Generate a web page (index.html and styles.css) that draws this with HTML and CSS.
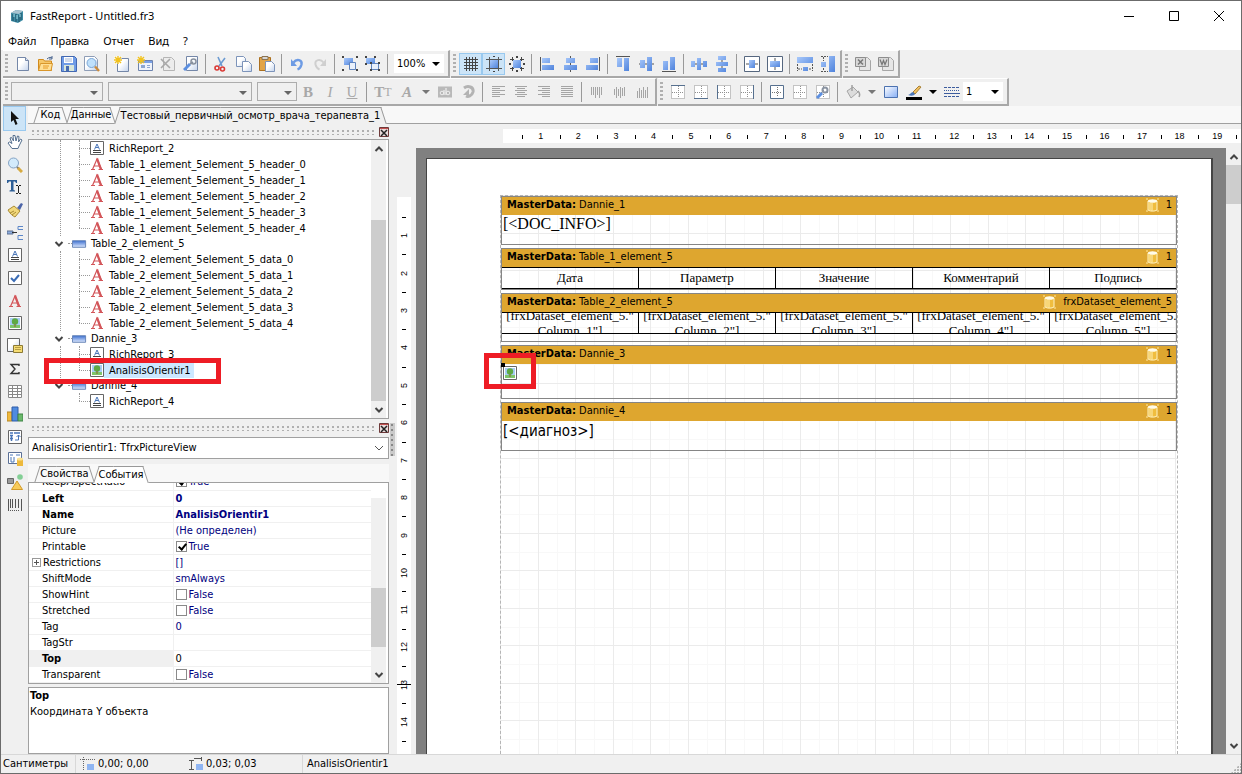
FILE: index.html
```html
<!DOCTYPE html>
<html lang="ru">
<head>
  <meta charset="UTF-8" />
  <meta name="viewport" content="width=device-width, initial-scale=1" />
  <title>FastReport - Untitled.fr3</title>
  <link rel="stylesheet" href="styles.css">
</head>
<body>
  <!-- Иконки -->
  <svg class="sprite" width="0" height="0" aria-hidden="true">
    <defs>
      <linearGradient id="gBlue" x1="0" y1="0" x2="1" y2="1"><stop offset="0" stop-color="#a9c9fb"/><stop offset="1" stop-color="#4f83dc"/></linearGradient>
      <linearGradient id="gPaper" x1="0" y1="0" x2="1" y2="1"><stop offset="0.4" stop-color="#fff"/><stop offset="1" stop-color="#c3d3ec"/></linearGradient>
      <linearGradient id="gBand" x1="0" y1="0" x2="0" y2="1"><stop offset="0" stop-color="#3c6fd0"/><stop offset="1" stop-color="#dfeaff"/></linearGradient>
      <linearGradient id="gFill" x1="0" y1="0" x2="1" y2="1"><stop offset="0" stop-color="#fff"/><stop offset="1" stop-color="#86aef5"/></linearGradient>
    </defs>
    <symbol id="logo" viewBox="0 0 16 16"><path d="M2 5l5-3 7 1v9l-5 3-7-2z" fill="#3c8aa3"/><path d="M2 5l5-3 7 1-4 3z" fill="#a9c3cf"/><path d="M4 6v7M7 6v8M10 7v7M12 5v7" stroke="#1f4f63"/><path d="M5 6v3M8 7v4M11 6v3" stroke="#9fe0ea"/></symbol>
    <symbol id="new" viewBox="0 0 16 16"><path d="M2.500 1.500h8l3 3v10h-11z" fill="url(#gPaper)" stroke="#7487a8"/><path d="M10.500 1.500v3h3" fill="#dce6f5" stroke="#7487a8"/></symbol>
    <symbol id="open" viewBox="0 0 16 16"><path d="M.5 14.500v-11h5l1 1.500h7v9.500z" fill="#f6c768" stroke="#d18a1c"/><path d="M.5 14.500l2-7h12l-1.500 7z" fill="#ffdf95" stroke="#d9962a"/><path d="M5 10h6M5 12h5" stroke="#e79b26"/><path d="M9 3c2-2 4-2 5-1M14 0v3h-3" fill="none" stroke="#47638f"/></symbol>
    <symbol id="save" viewBox="0 0 16 16"><path d="M.5.500h13l2 2v13H.500z" fill="#6f9be6" stroke="#4368b0"/><path d="M3 1h9v6H3z" fill="#fff"/><path d="M4 3h7M4 5h7" stroke="#a3b6d6"/><path d="M3 9h10v6H3z" fill="#d9e6d9"/><path d="M5 10h3v5H5z" fill="#476bb0"/></symbol>
    <symbol id="preview" viewBox="0 0 16 16"><path d="M.5.500h10l3 3v11H.500z" fill="url(#gPaper)" stroke="#8e9db6"/><circle cx="7.500" cy="7" r="4.500" fill="#bfe0fb" stroke="#7ba6d6"/><path d="M11 10.500l4 4.500" stroke="#c98a3d" stroke-width="2.400"/></symbol>
    <symbol id="newpage" viewBox="0 0 16 16"><path d="M3.500 2.500h11v13h-11z" fill="url(#gPaper)" stroke="#7487a8"/><path d="M0 0h8v8H0z" fill="#fff" opacity="0.500"/><path d="M4 0v8M0 4h8M1 1l6 6M7 1L1 7" stroke="#f2c21c" stroke-width="1.400"/></symbol>
    <symbol id="newdlg" viewBox="0 0 16 16"><path d="M1.500 4.500h14v10h-14z" fill="#eef3fb" stroke="#6d83ad"/><path d="M2 5h13v2H2z" fill="#7ba1e6"/><path d="M4 9h4v3H4zM10 9h3v1h-3zM10 11h3v1h-3z" fill="#8ba6d2"/><path d="M4 0v8M0 4h8M1 1l6 6M7 1L1 7" stroke="#f2c21c" stroke-width="1.400"/></symbol>
    <symbol id="delpage" viewBox="0 0 16 16"><path d="M3.500 1.500h8l3 3v10h-11z" fill="#ececec" stroke="#b5b5b5"/><path d="M1 3l9 9M10 3l-9 9" stroke="#a8a8a8" stroke-width="1.600"/></symbol>
    <symbol id="pageset" viewBox="0 0 16 16"><path d="M3.500.500h11v14h-11z" fill="url(#gPaper)" stroke="#7487a8"/><path d="M1 14l6-6" stroke="#5c8fe0" stroke-width="3"/><path d="M7 8l3-2" stroke="#88919f" stroke-width="2"/><circle cx="10.500" cy="5.500" r="2.500" fill="none" stroke="#88919f" stroke-width="1.500"/></symbol>
    <symbol id="cut" viewBox="0 0 16 16"><path d="M5 1l4 9M12 2L6 10" stroke="#6c9bd2" stroke-width="1.600"/><circle cx="4" cy="12" r="2" fill="none" stroke="#da3a35" stroke-width="1.600"/><circle cx="9.500" cy="13" r="2" fill="none" stroke="#da3a35" stroke-width="1.600"/></symbol>
    <symbol id="copy" viewBox="0 0 16 16"><path d="M.5.500h7l2 2v8h-9z" fill="url(#gPaper)" stroke="#7d94ba"/><path d="M6.500 5.500h6l3 3v7h-9z" fill="url(#gPaper)" stroke="#7d94ba"/></symbol>
    <symbol id="paste" viewBox="0 0 16 16"><path d="M.5 1.500h11v13H.500z" fill="#e3a548" stroke="#ab6f1e"/><path d="M3 .500h6v3H3z" fill="#d6d6d6" stroke="#8b7350"/><path d="M6.500 5.500h6l3 3v7h-9z" fill="url(#gPaper)" stroke="#7d94ba"/></symbol>
    <symbol id="undo" viewBox="0 0 16 16"><path d="M4.500 6.500c3-4 9-3 8 2-.5 2-1.500 4-4 5" fill="none" stroke="#6d9be4" stroke-width="2.400"/><path d="M2 3v7h6z" fill="#6d9be4"/></symbol>
    <symbol id="redo" viewBox="0 0 16 16"><path d="M11.500 6.500c-3-4-9-3-8 2 .5 2 1.500 4 4 5" fill="none" stroke="#cfcfcf" stroke-width="2"/><path d="M14 3v7H8z" fill="#cfcfcf"/></symbol>
    <symbol id="group" viewBox="0 0 16 16"><path d="M2 2h9v7H2z" fill="url(#gBlue)"/><path d="M7.500 6.500h6v7h-6z" fill="#e9f0fb" stroke="#5f83bd"/><path d="M0 0h2v2H0zM14 0h2v2h-2zM0 13h2v2H0zM14 13h2v2h-2z" fill="#444"/></symbol>
    <symbol id="ungroup" viewBox="0 0 16 16"><path d="M1 2h9v6H1z" fill="url(#gBlue)"/><path d="M6.500 7.500h7v6h-7z" fill="#e9f0fb" stroke="#5f83bd"/><path d="M0 0h2v2H0zM9 0h2v2H9zM0 7h2v2H0zM5 6h2v2H5zM13 6h2v2h-2zM5 13h2v2H5zM13 13h2v2h-2z" fill="#444"/></symbol>
    <symbol id="grid" viewBox="0 0 16 16"><path d="M3.500 1v14M6.500 1v14M9.500 1v14M12.500 1v14M1 3.500h14M1 6.500h14M1 9.500h14M1 12.500h14" stroke="#444"/></symbol>
    <symbol id="togrid" viewBox="0 0 16 16"><path d="M4 4h8v8H4z" fill="url(#gBlue)"/><path d="M3.500 1v14M12.500 1v14M0 3.500h16M0 12.500h16" stroke="#555"/><path d="M7 0h2v1H7zM7 15h2v1H7z" fill="#444"/></symbol>
    <symbol id="fitgrid" viewBox="0 0 16 16"><path d="M4 4h8v8H4z" fill="url(#gBlue)"/><path d="M3.500 1v14M12.500 1v14M1 3.500h14M1 12.500h14" stroke="#444" stroke-dasharray="4 6"/><path d="M7 0h2v2H7zM7 14h2v2H7zM0 7h2v2H0zM14 7h2v2h-2z" fill="#444"/></symbol>
    <symbol id="al" viewBox="0 0 16 16"><path d="M1.500 1v14" stroke="#555"/><path d="M3 2h8v5H3zM3 9h12v5H3z" fill="url(#gBlue)"/></symbol>
    <symbol id="ac" viewBox="0 0 16 16"><path d="M8.500 0v16" stroke="#555"/><path d="M4 2h9v5H4zM2 9h13v5H2z" fill="url(#gBlue)"/></symbol>
    <symbol id="ar" viewBox="0 0 16 16"><path d="M14.500 1v14" stroke="#555"/><path d="M5 2h8v5H5zM1 9h12v5H1z" fill="url(#gBlue)"/></symbol>
    <symbol id="at" viewBox="0 0 16 16"><path d="M1 .500h14" stroke="#555"/><path d="M2 2h5v9H2zM9 2h5v13H9z" fill="url(#gBlue)"/></symbol>
    <symbol id="am" viewBox="0 0 16 16"><path d="M1 8h15" stroke="#555"/><path d="M2 4h5v8H2zM9 1h5v14H9z" fill="url(#gBlue)"/></symbol>
    <symbol id="ab" viewBox="0 0 16 16"><path d="M1 15.500h14" stroke="#555"/><path d="M2 5h5v9H2zM9 1h5v13H9z" fill="url(#gBlue)"/></symbol>
    <symbol id="sh" viewBox="0 0 16 16"><path d="M0 8h16" stroke="#555"/><path d="M0 5h4v6H0zM6 2h4v12H6zM12 5h4v6h-4z" fill="url(#gBlue)"/></symbol>
    <symbol id="sv" viewBox="0 0 16 16"><path d="M8 0v16" stroke="#555"/><path d="M4 0h8v4H4zM2 6h12v4H2zM4 12h8v4H4z" fill="url(#gBlue)"/></symbol>
    <symbol id="ch" viewBox="0 0 16 16"><path d="M.5.500h15v15H.500z" fill="#fff" stroke="#56677f"/><path d="M2 8h12" stroke="#555"/><path d="M5 4h6v8H5z" fill="url(#gBlue)"/></symbol>
    <symbol id="cv" viewBox="0 0 16 16"><path d="M.5.500h15v15H.500z" fill="#fff" stroke="#56677f"/><path d="M8 2v12" stroke="#555"/><path d="M3 5h10v6H3z" fill="url(#gBlue)"/></symbol>
    <symbol id="sw" viewBox="0 0 16 16"><path d="M0 1h16v6H0zM6 11h5v4H6z" fill="url(#gBlue)"/><path d="M.5 8v7M15.500 8v7M1 13h4M12 13h3" stroke="#555" stroke-dasharray="2 1"/></symbol>
    <symbol id="ss" viewBox="0 0 16 16"><path d="M9 0h6v16H9zM1 6h5v5H1z" fill="url(#gBlue)"/><path d="M1 .500h7M1 15.500h7M3.500 1v4M3.500 12v3" stroke="#555" stroke-dasharray="2 1"/></symbol>
    <symbol id="xls" viewBox="0 0 16 16"><path d="M4.500 1.500h8l3 3v10h-11z" fill="#e6e6e6" stroke="#a6a6a6"/><path d="M.5 1.500h10v9H.500z" fill="#d8d8d8" stroke="#8d8d8d"/><path d="M3 3.500l5 5M8 3.500l-5 5" stroke="#777" stroke-width="1.500"/></symbol>
    <symbol id="doc" viewBox="0 0 16 16"><path d="M4.500 1.500h8l3 3v10h-11z" fill="#e6e6e6" stroke="#a6a6a6"/><path d="M.5 1.500h10v9H.500z" fill="#d8d8d8" stroke="#8d8d8d"/><path d="M2 3.500l2 5 1.500-4 1.500 4 2-5" fill="none" stroke="#777" stroke-width="1.200"/></symbol>
    <symbol id="hl" viewBox="0 0 16 16"><path d="M1 2.500h14v11H1z" fill="#b9b9b9"/><path d="M7 6v5M9 4v7" stroke="#eee" stroke-width="1.200"/><circle cx="5" cy="9" r="1.800" fill="none" stroke="#eee"/><circle cx="11" cy="9" r="1.800" fill="none" stroke="#eee"/></symbol>
    <symbol id="rot" viewBox="0 0 16 16"><path d="M4 4c4-3 10-1 9 4-1 4-5 5-7 4" fill="none" stroke="#b3b3b3" stroke-width="3"/><path d="M9 5v6H3z" fill="#b3b3b3"/></symbol>
    <symbol id="tl" viewBox="0 0 16 16"><path d="M2 2.500h13M2 4.500h8M2 6.500h13M2 8.500h8M2 10.500h13M2 12.500h8" stroke="#a5a5a5"/></symbol>
    <symbol id="tc" viewBox="0 0 16 16"><path d="M2 2.500h12M4 4.500h8M2 6.500h12M4 8.500h8M2 10.500h12M4 12.500h8" stroke="#a5a5a5"/></symbol>
    <symbol id="tr" viewBox="0 0 16 16"><path d="M2 2.500h12M6 4.500h8M2 6.500h12M6 8.500h8M2 10.500h12M6 12.500h8" stroke="#a5a5a5"/></symbol>
    <symbol id="tj" viewBox="0 0 16 16"><path d="M2 2.500h12M2 4.500h12M2 6.500h12M2 8.500h12M2 10.500h12M2 12.500h12" stroke="#a5a5a5"/></symbol>
    <symbol id="vt" viewBox="0 0 16 16"><path d="M2.500 3v8M4.500 3v8M6.500 3v11M8.500 3v8M10.500 3v11M12.500 3v8" stroke="#a5a5a5"/></symbol>
    <symbol id="vm" viewBox="0 0 16 16"><path d="M2.500 5v6M4.500 3v11M6.500 5v7M8.500 3v11M10.500 4v8M12.500 3v9" stroke="#a5a5a5"/></symbol>
    <symbol id="vb" viewBox="0 0 16 16"><path d="M2.500 7v7M4.500 4v10M6.500 6v8M8.500 3v11M10.500 6v8M12.500 3v11" stroke="#a5a5a5"/></symbol>
    <symbol id="dots" viewBox="0 0 16 16"><path d="M1.500 1.500h13v13h-13zM8.500 2v12M2 8.500h12" fill="#fff" stroke="#909090" stroke-dasharray="1 1"/></symbol>
    <symbol id="fall" viewBox="0 0 16 16"><path d="M1.500 1.500h13v13h-13z" fill="#fff" stroke="#56708f"/><path d="M8.500 3v10M3 8.500h10" stroke="#777" stroke-dasharray="1 1"/></symbol>
    <symbol id="bucket" viewBox="0 0 16 16"><path d="M2 7l6-4 5 5-7 6z" fill="#dcdcdc" stroke="#a5a5a5"/><path d="M7 7V1M13 7c2 2 2 4 1 6" fill="none" stroke="#a0a0a0" stroke-width="1.500"/></symbol>
    <symbol id="rect" viewBox="0 0 16 16"><path d="M1.500 2.500h13v11h-13z" fill="url(#gFill)" stroke="#4c72b0"/></symbol>
    <symbol id="pen" viewBox="0 0 16 16"><path d="M7 8l6-6 2 1-6 7z" fill="#f0c060" stroke="#a98035"/><path d="M2 11c2 0 3-3 5-3l2 2c-1 2-4 2-7 1z" fill="#4a76b8"/><path d="M0 13h16v3H0z" fill="#000"/></symbol>
    <symbol id="style" viewBox="0 0 16 16"><path d="M0 3.500h16M0 12.500h16" stroke="#3c5c9e" stroke-dasharray="3 1"/><path d="M0 6.500h16" stroke="#3c5c9e" stroke-dasharray="1 1"/><path d="M0 9.500h16" stroke="#3c5c9e"/></symbol>
    <symbol id="arrow" viewBox="0 0 16 16"><path d="M4 1l8 8H8.500l2 5-2 1-2-5L4 12z" fill="#111"/></symbol>
    <symbol id="hand" viewBox="0 0 16 16"><path d="M5 14.500L1 9l1.500-1L5 9.500 3 4l1.500-.5L6.500 7 6 1.500h2L9 7l1.500-5 1.500.500-.5 5.500 2-3 1.500 1L12 12l-1 2.500z" fill="#fff" stroke="#56708f"/></symbol>
    <symbol id="lens" viewBox="0 0 16 16"><circle cx="6.500" cy="6" r="5" fill="#d3ebfc" stroke="#85a3c4"/><path d="M10 10l1.500 1.500" stroke="#777" stroke-width="2"/><path d="M11 11l4 4" stroke="#d7ab42" stroke-width="3"/></symbol>
    <symbol id="tedit" viewBox="0 0 16 16"><path d="M0 1h10v3H9L8 2.500H6.500V11l1.500.500v1H2.500v-1L4 11V2.500H2L1 4H0z" fill="#2e5f97"/><path d="M9 6.500h2m1 0h2M9 14.500h2m1 0h2M11.500 7v7" stroke="#222"/></symbol>
    <symbol id="brush" viewBox="0 0 16 16"><path d="M10 6l4-5 2 1-3 6z" fill="#4d65a8"/><path d="M1 8l6-4 6 5-5 6c-2-1-5-3-7-7z" fill="#f1d87a" stroke="#a88a35"/><path d="M3 11l4-2M5 13l4-3" stroke="#a88a35"/></symbol>
    <symbol id="bandins" viewBox="0 0 16 16"><path d="M0 6h6v3H0z" fill="#8eaee0" stroke="#5a6f8f"/><path d="M5 7.500h5" stroke="#333"/><path d="M16 1.500h-5v3h5M16 10.500h-5v4h5" fill="none" stroke="#5b86c8"/></symbol>
    <symbol id="rich" viewBox="0 0 14 14"><path d="M.5.500h13v13H.500z" fill="#fff" stroke="#666"/><path d="M4.500 8.500L7 3l2.500 5.500M5.500 6.500h3" fill="none" stroke="#4a76b8"/><path d="M3 9.500h8M3 11.500h8" stroke="#444"/></symbol>
    <symbol id="chk" viewBox="0 0 14 14"><path d="M.5.500h13v13H.500z" fill="#fff" stroke="#666"/><path d="M3 7l3 3 5-6" fill="none" stroke="#3b6cb5" stroke-width="2"/></symbol>
    <symbol id="txt" viewBox="0 0 14 14"><path d="M2.500 12.500L7 2l4.500 10.500M4 9h5" fill="none" stroke="#d3565a" stroke-width="1.200"/><path d="M7 1.500l4 11" stroke="#d3565a" stroke-width="2.200"/><path d="M1 12.500h4M8.500 12.500h4.500" stroke="#d3565a"/></symbol>
    <symbol id="pic" viewBox="0 0 14 14"><path d="M.5.500h13v13H.500z" fill="#fff" stroke="#666"/><path d="M2 2h10v7H2z" fill="#a8cdf5"/><path d="M2 9h10v3H2z" fill="#7ec56a"/><circle cx="7" cy="5.500" r="3.200" fill="#5da944"/><path d="M7 8v3" stroke="#8a6430"/></symbol>
    <symbol id="sub" viewBox="0 0 16 16"><path d="M.5.500h12v13H.500z" fill="url(#gPaper)" stroke="#666"/><path d="M6.500 7.500h9v7h-9z" fill="#f5dc73" stroke="#8c7a35"/><path d="M8 9.500h6M8 11.500h6" stroke="#b89f45"/></symbol>
    <symbol id="sigma" viewBox="0 0 16 16"><path d="M12 5V3.500H4L8 8l-4 4.500h8V11" fill="none" stroke="#333" stroke-width="1.400"/></symbol>
    <symbol id="cross" viewBox="0 0 16 16"><path d="M1.500 2.500h13v12h-13zM1.500 5.500h13M1.500 8.500h13M1.500 11.500h13M5.500 2.500v12M10.500 2.500v12" fill="#fff" stroke="#888"/></symbol>
    <symbol id="chart" viewBox="0 0 16 16"><path d="M0 6h5v9H0z" fill="#f0b93c" stroke="#b58625"/><path d="M5 1h6v14H5z" fill="#4f8be0" stroke="#2f5ca8"/><path d="M11 8h5v7h-5z" fill="#6bb86b" stroke="#3e8447"/></symbol>
    <symbol id="map" viewBox="0 0 16 16"><path d="M1.500 1.500h13v13h-13z" fill="#fff" stroke="#666"/><path d="M3 4h3M7 4h6M4.500 6v6M3 6.500h3M3 9.500h3" fill="none" stroke="#4a76b8" stroke-width="1.500"/><path d="M8 11h3.500V6M9.500 8l2-2 2 2" fill="none" stroke="#4a76b8"/></symbol>
    <symbol id="dbmap" viewBox="0 0 16 16"><path d="M1.500 1.500h13v11h-13z" fill="#fff" stroke="#5b7096"/><path d="M3 4h3M9 4h4M4 6v5h3V6" fill="none" stroke="#4a76b8"/><path d="M10 8h6v7h-6z" fill="#edb93c"/><ellipse cx="13" cy="8" rx="3" ry="1.500" fill="#fae293"/></symbol>
    <symbol id="shapes" viewBox="0 0 16 16"><path d="M.5 4.500h6v5h-6z" fill="#9a9a9a" stroke="#666"/><circle cx="13" cy="3" r="2.800" fill="#83cf95"/><path d="M10 7l5.500 8.500h-11z" fill="#f8cb5a" stroke="#d49b28"/></symbol>
    <symbol id="bar" viewBox="0 0 16 16"><path d="M1.500 2v12M3.500 2v9M5.500 2v9M8.500 2v9M11.500 2v9M14.500 2v12" stroke="#555"/><path d="M3 13.500h10" stroke="#555" stroke-dasharray="1 1"/></symbol>
    <symbol id="band" viewBox="0 0 16 10"><path d="M.5 1.500h14v7H.500z" fill="url(#gBand)" stroke="#6482b4"/></symbol>
    <symbol id="db" viewBox="0 0 14 14"><path d="M2 3h9v9c-2 1.500-7 1.500-9 0z" fill="#f0bd3e" stroke="#fff3c4"/><path d="M4 5v7M6 5v8" stroke="#fff0b4"/><ellipse cx="6.500" cy="3" rx="4.500" ry="1.800" fill="#fffbe9"/><path d="M0 1h2M11 1h2M0 13h2M11 13h2" stroke="#ffe9a3"/></symbol>
    <symbol id="up" viewBox="0 0 10 10"><path d="M1.500 7L5 3.500 8.500 7" fill="none" stroke="#444" stroke-width="2"/></symbol>
    <symbol id="down" viewBox="0 0 10 10"><path d="M1.500 3L5 6.500 8.500 3" fill="none" stroke="#444" stroke-width="2"/></symbol>
    <symbol id="pin" viewBox="0 0 10 10"><path d="M.5.500h9v9h-9z" fill="#e8dada" stroke="#6e3a3a"/><path d="M2 3l6 6M8 3L2 9" stroke="#222" stroke-width="1.500"/><path d="M1 1.500h8" stroke="#c45050"/></symbol>
    <symbol id="pos" viewBox="0 0 16 14"><path d="M0 2.500h15M3.500 0v14" stroke="#666" stroke-dasharray="1 1"/><path d="M7 7h7v6H7z" fill="#8fb5f2"/></symbol>
    <symbol id="size" viewBox="0 0 16 14"><path d="M3.500 3v9M1 12.500h5M1 3.500h5M6 1.500h8M13.500 0v4" stroke="#555"/><path d="M8 7h7v6H8z" fill="#8fb5f2"/></symbol>
  </svg>

  <div class="window">
    <header class="titlebar">
      <svg class="i"><use href="#logo"/></svg>
      <h1>FastReport - Untitled.fr3</h1>
      <div class="winbtns">
        <button aria-label="Свернуть"><svg class="w"><path d="M0 5.500h10"/></svg></button>
        <button aria-label="Развернуть"><svg class="w"><path d="M.5.500h9v9h-9z"/></svg></button>
        <button aria-label="Закрыть"><svg class="w"><path d="M0 0l10 10M10 0L0 10"/></svg></button>
      </div>
    </header>

    <nav class="menu">
      <a href="#">Файл</a><a href="#">Правка</a><a href="#">Отчет</a><a href="#">Вид</a><a href="#">?</a>
    </nav>

    <div class="toolrow">
      <div class="bar">
        <i class="grip"></i>
        <button aria-label="Новый"><svg class="i"><use href="#new"/></svg></button>
        <button aria-label="Открыть"><svg class="i"><use href="#open"/></svg></button>
        <button aria-label="Сохранить"><svg class="i"><use href="#save"/></svg></button>
        <button aria-label="Просмотр"><svg class="i"><use href="#preview"/></svg></button>
        <i class="sep"></i>
        <button aria-label="Новая страница"><svg class="i"><use href="#newpage"/></svg></button>
        <button aria-label="Новая форма"><svg class="i"><use href="#newdlg"/></svg></button>
        <button aria-label="Удалить страницу"><svg class="i"><use href="#delpage"/></svg></button>
        <button aria-label="Настройки страницы"><svg class="i"><use href="#pageset"/></svg></button>
        <i class="sep"></i>
        <button aria-label="Вырезать"><svg class="i"><use href="#cut"/></svg></button>
        <button aria-label="Копировать"><svg class="i"><use href="#copy"/></svg></button>
        <button aria-label="Вставить"><svg class="i"><use href="#paste"/></svg></button>
        <i class="sep"></i>
        <button aria-label="Отменить"><svg class="i"><use href="#undo"/></svg></button>
        <button aria-label="Повторить"><svg class="i"><use href="#redo"/></svg></button>
        <i class="sep"></i>
        <button aria-label="Сгруппировать"><svg class="i"><use href="#group"/></svg></button>
        <button aria-label="Разгруппировать"><svg class="i"><use href="#ungroup"/></svg></button>
        <i class="sep"></i>
        <span class="combo flat zoom"><select aria-label="Масштаб"><option>100%</option></select></span>
      </div>
      <div class="bar">
        <i class="grip"></i>
        <button class="on" aria-label="Сетка"><svg class="i"><use href="#grid"/></svg></button>
        <button class="on" aria-label="Выравнивать по сетке"><svg class="i"><use href="#togrid"/></svg></button>
        <button aria-label="Расположить по сетке"><svg class="i"><use href="#fitgrid"/></svg></button>
        <i class="sep"></i>
        <button aria-label="Левые края"><svg class="i"><use href="#al"/></svg></button>
        <button aria-label="Центры по горизонтали"><svg class="i"><use href="#ac"/></svg></button>
        <button aria-label="Правые края"><svg class="i"><use href="#ar"/></svg></button>
        <i class="sep"></i>
        <button aria-label="Верхние края"><svg class="i"><use href="#at"/></svg></button>
        <button aria-label="Центры по вертикали"><svg class="i"><use href="#am"/></svg></button>
        <button aria-label="Нижние края"><svg class="i"><use href="#ab"/></svg></button>
        <i class="sep"></i>
        <button aria-label="Распределить по ширине"><svg class="i"><use href="#sh"/></svg></button>
        <button aria-label="Распределить по высоте"><svg class="i"><use href="#sv"/></svg></button>
        <i class="sep"></i>
        <button aria-label="В центр по горизонтали"><svg class="i"><use href="#ch"/></svg></button>
        <button aria-label="В центр по вертикали"><svg class="i"><use href="#cv"/></svg></button>
        <i class="sep"></i>
        <button aria-label="Та же ширина"><svg class="i"><use href="#sw"/></svg></button>
        <button aria-label="Та же высота"><svg class="i"><use href="#ss"/></svg></button>
      </div>
      <div class="bar">
        <i class="grip"></i>
        <button aria-label="Excel"><svg class="i"><use href="#xls"/></svg></button>
        <button aria-label="Word"><svg class="i"><use href="#doc"/></svg></button>
      </div>
    </div>

    <div class="toolrow">
      <div class="bar">
        <i class="grip"></i>
        <span class="combo off c-style"><select aria-label="Стиль" disabled><option></option></select></span>
        <span class="combo off c-font"><select aria-label="Шрифт" disabled><option></option></select></span>
        <span class="combo off c-size"><select aria-label="Размер" disabled><option></option></select></span>
        <button class="ch" disabled><b>B</b></button>
        <button class="ch" disabled><em>I</em></button>
        <button class="ch" disabled><u>U</u></button>
        <i class="sep"></i>
        <button class="ch tt" disabled><b>T</b><small>T</small></button>
        <button class="ch" disabled><b><em>A</em></b></button>
        <button class="drop" aria-label="Цвет шрифта"></button>
        <button aria-label="Выделение"><svg class="i"><use href="#hl"/></svg></button>
        <button aria-label="Поворот"><svg class="i"><use href="#rot"/></svg></button>
        <i class="sep"></i>
        <button aria-label="Влево"><svg class="i"><use href="#tl"/></svg></button>
        <button aria-label="По центру"><svg class="i"><use href="#tc"/></svg></button>
        <button aria-label="Вправо"><svg class="i"><use href="#tr"/></svg></button>
        <button aria-label="По ширине"><svg class="i"><use href="#tj"/></svg></button>
        <i class="sep"></i>
        <button aria-label="Вверх"><svg class="i"><use href="#vt"/></svg></button>
        <button aria-label="Посередине"><svg class="i"><use href="#vm"/></svg></button>
        <button aria-label="Вниз"><svg class="i"><use href="#vb"/></svg></button>
      </div>
      <div class="bar">
        <i class="grip"></i>
        <button aria-label="Верхняя линия"><svg class="i"><use href="#dots"/><path d="M1 1.500h14" stroke="#56708f"/></svg></button>
        <button aria-label="Нижняя линия"><svg class="i"><use href="#dots"/><path d="M1 14.500h14" stroke="#56708f"/></svg></button>
        <button aria-label="Левая линия"><svg class="i"><use href="#dots"/><path d="M1.500 1v14" stroke="#56708f"/></svg></button>
        <button aria-label="Правая линия"><svg class="i"><use href="#dots"/><path d="M14.500 1v14" stroke="#56708f"/></svg></button>
        <i class="sep"></i>
        <button aria-label="Все линии"><svg class="i"><use href="#fall"/></svg></button>
        <button aria-label="Нет линий"><svg class="i"><use href="#dots"/></svg></button>
        <button aria-label="Правка рамки"><svg class="i"><use href="#dots"/><path d="M2 14l5-5" stroke="#5c8fe0" stroke-width="3"/><circle cx="10" cy="6" r="2.500" fill="none" stroke="#8a93a1" stroke-width="2"/></svg></button>
        <i class="sep"></i>
        <button aria-label="Заливка"><svg class="i"><use href="#bucket"/></svg></button>
        <button class="drop" aria-label="Цвет заливки"></button>
        <button aria-label="Правка заливки"><svg class="i"><use href="#rect"/></svg></button>
        <button aria-label="Цвет линии"><svg class="i"><use href="#pen"/></svg></button>
        <button class="drop dark" aria-label="Выбор цвета линии"></button>
        <button aria-label="Стиль линии"><svg class="i"><use href="#style"/></svg></button>
        <span class="combo flat c-width"><select aria-label="Толщина линии"><option>1</option></select></span>
      </div>
    </div>

    <main class="work">
      <div class="toolbox">
        <button class="on" aria-label="Выбор"><svg class="i"><use href="#arrow"/></svg></button>
        <button aria-label="Рука"><svg class="i"><use href="#hand"/></svg></button>
        <button aria-label="Лупа"><svg class="i"><use href="#lens"/></svg></button>
        <button aria-label="Правка текста"><svg class="i"><use href="#tedit"/></svg></button>
        <button aria-label="Копия формата"><svg class="i"><use href="#brush"/></svg></button>
        <button aria-label="Вставить бэнд"><svg class="i"><use href="#bandins"/></svg></button>
        <button aria-label="Rich"><svg class="s"><use href="#rich"/></svg></button>
        <button aria-label="Флажок"><svg class="s"><use href="#chk"/></svg></button>
        <button aria-label="Текст"><svg class="s"><use href="#txt"/></svg></button>
        <button aria-label="Рисунок"><svg class="s"><use href="#pic"/></svg></button>
        <button aria-label="Подотчет"><svg class="i"><use href="#sub"/></svg></button>
        <button aria-label="Системный текст"><svg class="i"><use href="#sigma"/></svg></button>
        <button aria-label="Таблица"><svg class="i"><use href="#cross"/></svg></button>
        <button aria-label="Диаграмма"><svg class="i"><use href="#chart"/></svg></button>
        <button aria-label="Кросс-таблица"><svg class="i"><use href="#map"/></svg></button>
        <button aria-label="Кросс-таблица БД"><svg class="i"><use href="#dbmap"/></svg></button>
        <button aria-label="Рисование"><svg class="i"><use href="#shapes"/></svg></button>
        <button aria-label="Штрихкод"><svg class="i"><use href="#bar"/></svg></button>
      </div>

      <div class="content">
        <div class="tabs pagetabs">
          <button class="tab t-code">Код</button>
          <button class="tab t-data">Данные</button>
          <button class="tab active t-page">Тестовый_первичный_осмотр_врача_терапевта_1</button>
        </div>

        <div class="split">
          <aside class="side">
            <div class="dock"><i></i><button aria-label="Закрыть дерево"><svg><use href="#pin"/></svg></button></div>
            <div class="tree">
              <ul class="nodes">
                <li>
                  <ul>
                    <li><svg class="s"><use href="#rich"/></svg><span>RichReport_2</span></li>
                    <li><svg class="s"><use href="#txt"/></svg><span>Table_1_element_5element_5_header_0</span></li>
                    <li><svg class="s"><use href="#txt"/></svg><span>Table_1_element_5element_5_header_1</span></li>
                    <li><svg class="s"><use href="#txt"/></svg><span>Table_1_element_5element_5_header_2</span></li>
                    <li><svg class="s"><use href="#txt"/></svg><span>Table_1_element_5element_5_header_3</span></li>
                    <li><svg class="s"><use href="#txt"/></svg><span>Table_1_element_5element_5_header_4</span></li>
                  </ul>
                </li>
                <li>
                  <div class="node"><svg class="v"><use href="#down"/></svg><i></i><svg class="bd"><use href="#band"/></svg><span>Table_2_element_5</span></div>
                  <ul>
                    <li><svg class="s"><use href="#txt"/></svg><span>Table_2_element_5element_5_data_0</span></li>
                    <li><svg class="s"><use href="#txt"/></svg><span>Table_2_element_5element_5_data_1</span></li>
                    <li><svg class="s"><use href="#txt"/></svg><span>Table_2_element_5element_5_data_2</span></li>
                    <li><svg class="s"><use href="#txt"/></svg><span>Table_2_element_5element_5_data_3</span></li>
                    <li><svg class="s"><use href="#txt"/></svg><span>Table_2_element_5element_5_data_4</span></li>
                  </ul>
                </li>
                <li>
                  <div class="node"><svg class="v"><use href="#down"/></svg><i></i><svg class="bd"><use href="#band"/></svg><span>Dannie_3</span></div>
                  <ul>
                    <li><svg class="s"><use href="#rich"/></svg><span>RichReport_3</span></li>
                    <li class="sel"><svg class="s"><use href="#pic"/></svg><span>AnalisisOrientir1</span><b class="mark"></b></li>
                  </ul>
                </li>
                <li>
                  <div class="node"><svg class="v"><use href="#down"/></svg><i></i><svg class="bd"><use href="#band"/></svg><span>Dannie_4</span></div>
                  <ul class="last">
                    <li><svg class="s"><use href="#rich"/></svg><span>RichReport_4</span></li>
                  </ul>
                </li>
              </ul>
              <div class="scroll s-tree">
                <button aria-label="Вверх"><svg><use href="#up"/></svg></button>
                <i class="before"></i><i class="thumb"></i><i class="after"></i>
                <button aria-label="Вниз"><svg><use href="#down"/></svg></button>
              </div>
            </div>

            <div class="dock low"><i></i><button aria-label="Закрыть инспектор"><svg><use href="#pin"/></svg></button></div>
            <div class="object">
              <select aria-label="Объект"><option>AnalisisOrientir1: TfrxPictureView</option></select>
              <svg viewBox="0 0 10 10"><path d="M1 3l4 4 4-4" fill="none" stroke="#555"/></svg>
            </div>

            <div class="tabs proptabs">
              <button class="tab t-props">Свойства</button>
              <button class="tab active t-events">События</button>
            </div>
            <div class="props">
              <div class="rows">
                <table>
                  <tr><th scope="row">KeepAspectRatio</th><td><label><input type="checkbox" checked>True</label></td></tr>
                  <tr class="strong"><th scope="row">Left</th><td>0</td></tr>
                  <tr class="strong"><th scope="row">Name</th><td>AnalisisOrientir1</td></tr>
                  <tr><th scope="row">Picture</th><td>(Не определен)</td></tr>
                  <tr><th scope="row">Printable</th><td><label><input type="checkbox" checked>True</label></td></tr>
                  <tr class="tree-row"><th scope="row"><button class="plus" aria-label="Раскрыть"></button>Restrictions</th><td>[]</td></tr>
                  <tr><th scope="row">ShiftMode</th><td>smAlways</td></tr>
                  <tr><th scope="row">ShowHint</th><td><label><input type="checkbox">False</label></td></tr>
                  <tr><th scope="row">Stretched</th><td><label><input type="checkbox">False</label></td></tr>
                  <tr><th scope="row">Tag</th><td>0</td></tr>
                  <tr><th scope="row">TagStr</th><td></td></tr>
                  <tr class="current"><th scope="row">Top</th><td>0</td></tr>
                  <tr><th scope="row">Transparent</th><td><label><input type="checkbox">False</label></td></tr>
                </table>
              </div>
              <div class="scroll s-props">
                <i class="blank"></i><i class="before"></i><i class="thumb"></i><i class="after"></i>
                <button aria-label="Вниз"><svg><use href="#down"/></svg></button>
              </div>
            </div>
            <div class="hint"><b>Top</b><p>Координата Y объекта</p></div>
          </aside>

          <div class="splitter"><i></i></div>

          <section class="designer">
            <div class="hruler">
              <span>1</span><span>2</span><span>3</span><span>4</span><span>5</span><span>6</span><span>7</span><span>8</span><span>9</span><span>10</span><span>11</span><span>12</span><span>13</span><span>14</span><span>15</span><span>16</span><span>17</span><span>18</span><span>19</span>
            </div>
            <div class="vruler">
              <span>1</span><span>2</span><span>3</span><span>4</span><span>5</span><span>6</span><span>7</span><span>8</span><span>9</span><span>10</span><span>11</span><span>12</span><span class="cur">13</span><span>14</span>
            </div>
            <div class="canvas">
              <div class="sheet">
                <div class="area">
                  <div class="bandbox">
                    <div class="bh"><b>MasterData:</b> Dannie_1<span><svg class="s"><use href="#db"/></svg>1</span></div>
                    <p class="serif">[&lt;DOC_INFO&gt;]</p>
                  </div>
                  <div class="bandbox clip short">
                    <div class="bh"><b>MasterData:</b> Table_1_element_5<span><svg class="s"><use href="#db"/></svg>1</span></div>
                    <table class="cells">
                      <tr><th>Дата</th><th>Параметр</th><th>Значение</th><th>Комментарий</th><th>Подпись</th></tr>
                    </table>
                  </div>
                  <div class="bandbox clip">
                    <div class="bh"><b>MasterData:</b> Table_2_element_5<span><svg class="s"><use href="#db"/></svg>frxDataset_element_5</span></div>
                    <table class="cells data">
                      <tr>
                        <td><div>[frxDataset_element_5."<br>Column_1"]</div></td>
                        <td><div>[frxDataset_element_5."<br>Column_2"]</div></td>
                        <td><div>[frxDataset_element_5."<br>Column_3"]</div></td>
                        <td><div>[frxDataset_element_5."<br>Column_4"]</div></td>
                        <td><div>[frxDataset_element_5."<br>Column_5"]</div></td>
                      </tr>
                    </table>
                  </div>
                  <div class="bandbox tall">
                    <div class="bh"><b>MasterData:</b> Dannie_3<span><svg class="s"><use href="#db"/></svg>1</span></div>
                    <div class="picobj"><svg class="s"><use href="#pic"/></svg><b class="mark"></b></div>
                  </div>
                  <div class="bandbox">
                    <div class="bh"><b>MasterData:</b> Dannie_4<span><svg class="s"><use href="#db"/></svg>1</span></div>
                    <p class="sans">[&lt;диагноз&gt;]</p>
                  </div>
                </div>
              </div>
            </div>
            <div class="scroll s-main">
              <button aria-label="Вверх"><svg><use href="#up"/></svg></button>
              <i class="thumb"></i><i class="after"></i>
              <button aria-label="Вниз"><svg><use href="#down"/></svg></button>
            </div>
          </section>
        </div>
      </div>
    </main>

    <footer class="status">
      <span class="units">Сантиметры</span>
      <span class="pos"><svg><use href="#pos"/></svg>0,00; 0,00</span>
      <span class="size"><svg><use href="#size"/></svg>0,03; 0,03</span>
      <span class="name">AnalisisOrientir1</span>
      <i class="corner"></i>
    </footer>
  </div>
</body>
</html>
```
FILE: styles.css
```css
* {
  box-sizing: border-box;
}
body {
  margin: 0;
  font-family: "DejaVu Sans Condensed", "DejaVu Sans", sans-serif;
  font-size: 11px;
  line-height: 14px;
  color: #000;
}
button {
  border: none;
  background: none;
  padding: 0;
  font: inherit;
  color: inherit;
}
select {
  appearance: none;
  border: none;
  background: none;
  font: inherit;
  color: inherit;
}
ul {
  list-style: none;
  margin: 0;
  padding: 0;
}
p {
  margin: 0;
}
i {
  font-style: normal;
}
svg {
  display: block;
  flex: none;
}
.sprite {
  position: absolute;
}
.i {
  width: 16px;
  height: 16px;
}
.s {
  width: 14px;
  height: 14px;
}

.window {
  display: flex;
  flex-direction: column;
  height: 100vh;
  border: 1px solid #6b6b6b;
  background: #f0f0f0;
  overflow: hidden;
}

/* Заголовок и меню */
.titlebar {
  display: flex;
  align-items: center;
  height: 30px;
  padding-left: 8px;
  background: #fff;
}
.titlebar h1 {
  flex: 1;
  margin: 0 0 0 5px;
  font: 11px/16px "Noto Sans", sans-serif;
}
.winbtns {
  display: flex;
}
.winbtns button {
  display: flex;
  justify-content: center;
  align-items: center;
  width: 45px;
  height: 28px;
}
.w {
  width: 10px;
  height: 10px;
  fill: none;
  stroke: #000;
}
.menu {
  display: flex;
  gap: 14px;
  height: 19px;
  padding-left: 7px;
  background: #fff;
  font: 11px/20px "Noto Sans", sans-serif;
}
.menu a {
  color: #000;
  text-decoration: none;
}

/* Панели инструментов */
.toolrow {
  display: flex;
  gap: 1px;
  height: 28px;
  flex: none;
  padding-left: 2px;
}
.bar {
  display: flex;
  align-items: center;
  padding: 0 1px 0 2px;
  border: 1px solid #a8a8a8;
  border-width: 0 2px 2px 0;
  border-top: 1px solid #fff;
}
.bar button {
  display: flex;
  justify-content: center;
  align-items: center;
  width: 23px;
  height: 22px;
}
.bar .on,
.toolbox .on {
  background: #cce4f7;
  border: 1px solid #99c9ef;
}
.grip {
  width: 3px;
  height: 20px;
  margin-right: 3px;
  background: repeating-linear-gradient(#b0b0b0 0 2px, transparent 2px 4px);
}
.sep {
  width: 1px;
  height: 20px;
  margin: 0 3px;
  background: #999;
}
.combo {
  position: relative;
  display: flex;
  height: 19px;
  margin-right: 5px;
}
.combo select {
  width: 100%;
  padding: 0 0 0 3px;
}
.combo::after {
  content: "";
  position: absolute;
  right: 4px;
  top: 8px;
  border: 4px solid transparent;
  border-top-color: #000;
  border-bottom: none;
}
.combo.off {
  border: 1px solid #adadad;
}
.combo.off::after {
  border-top-color: #666;
}
.combo.flat {
  margin-right: 3px;
  background: #fff;
}
.combo.zoom {
  width: 50px;
  margin-left: 3px;
}
.c-style {
  width: 92px;
}
.c-font {
  width: 144px;
}
.combo.c-size {
  width: 40px;
  margin-right: 0;
}
.c-width {
  width: 40px;
}
.bar .ch {
  width: 22px;
  font: 15px/20px "Liberation Serif", serif;
  color: #a8a8a8;
}
.bar .tt {
  width: 26px;
}
.tt small {
  font-size: 12px;
}
.bar .drop {
  width: 15px;
}
.drop::before {
  content: "";
  border: 4px solid transparent;
  border-top-color: #777;
  border-bottom: none;
}
.drop.dark::before {
  border-top-color: #000;
}

/* Рабочая область */
.work {
  display: flex;
  flex: 1;
  min-height: 0;
}
.toolbox {
  display: flex;
  flex-direction: column;
  width: 27px;
  height: 410px;
  padding: 0 2px;
}
.toolbox button {
  display: flex;
  flex: 1;
  justify-content: center;
  align-items: center;
}
.content {
  display: flex;
  flex-direction: column;
  flex: 1;
  min-width: 0;
}
.tabs {
  display: flex;
  align-items: flex-end;
  flex: none;
  border-bottom: 1px solid #a0a0a0;
  background: #f8f8f8;
}
.pagetabs {
  height: 18px;
  padding-left: 6px;
}
.proptabs {
  height: 19px;
  padding-left: 7px;
}
.tab {
  position: relative;
  height: 16px;
  z-index: 0;
  line-height: 16px;
  white-space: nowrap;
}
.tab::before,
.tab::after {
  content: "";
  position: absolute;
  z-index: -1;
  top: 0;
  bottom: 0;
  background: #f8f8f8;
  border-top: 1px solid #999;
}
.tab::before {
  left: 2px;
  right: 40%;
  border-left: 1px solid #999;
  transform: skewX(-18deg);
}
.tab::after {
  left: 40%;
  right: 2px;
  border-right: 1px solid #999;
  transform: skewX(18deg);
}
.tab.active {
  margin-bottom: -1px;
  height: 17px;
}
.tab.active::before,
.tab.active::after {
  background: #f0f0f0;
}
.proptabs .active::before,
.proptabs .active::after {
  background: #fff;
}
.t-code {
  width: 33px;
}
.t-data {
  width: 48px;
}
.t-page {
  width: 271px;
}
.t-props {
  width: 59px;
}
.t-events {
  width: 54px;
}
.split {
  display: flex;
  flex: 1;
  min-height: 0;
}

/* Левая панель */
.side {
  display: flex;
  flex-direction: column;
  width: 361px;
}
.dock {
  display: flex;
  align-items: center;
  gap: 2px;
  height: 15px;
  flex: none;
  padding-left: 3px;
}
.dock.low {
  height: 18px;
}
.dock i {
  flex: 1;
  height: 6px;
  background: radial-gradient(circle at 2px 2px, #b0b0b0 1px, transparent 1px) 0 0 / 5px 4px;
}
.dock button,
.dock svg {
  width: 10px;
  height: 10px;
}
.tree,
.props,
.hint,
.object {
  border: 1px solid #a0a0a0;
  background: #fff;
}
.tree {
  display: flex;
  height: 280px;
  flex: none;
}
.nodes {
  flex: 1;
}
.nodes ul {
  margin-left: 31px;
  border-left: 1px dotted #999;
}
.nodes ul.last {
  border-left-color: transparent;
}
.nodes ul li {
  position: relative;
  display: flex;
  align-items: center;
  height: 16px;
  padding-left: 29px;
}
.nodes ul li::before {
  content: "";
  position: absolute;
  left: 18px;
  top: 0;
  height: 16px;
  border-left: 1px dotted #999;
}
.nodes ul li:last-child::before {
  height: 8px;
}
.nodes ul li::after {
  content: "";
  position: absolute;
  left: 18px;
  top: 8px;
  width: 11px;
  border-top: 1px dotted #999;
}
.nodes span {
  padding: 0 3px 0 5px;
  line-height: 15px;
}
.nodes .sel > span {
  background: #cce8ff;
}
.sel .mark {
  left: -17px;
  top: -4px;
  width: 177px;
  height: 26px;
}
.mark {
  position: absolute;
  z-index: 2;
  border: 5px solid #ee1c25;
}
.node {
  display: flex;
  align-items: center;
  height: 15px;
  padding-left: 25px;
}
.node i {
  width: 4px;
  margin-left: 4px;
  border-top: 1px dotted #999;
}
.v {
  width: 10px;
  height: 10px;
}
.bd {
  width: 15px;
  height: 10px;
}
.node span {
  padding-left: 4px;
}
.scroll {
  display: flex;
  flex-direction: column;
  width: 15px;
  background: #f0f0f0;
}
.scroll button {
  display: flex;
  justify-content: center;
  align-items: center;
  height: 17px;
}
.scroll svg {
  width: 10px;
  height: 10px;
}
.thumb {
  background: #cdcdcd;
}
.s-tree {
  margin-right: 2px;
}
.s-tree .before {
  flex: 63;
}
.s-tree .thumb {
  flex: 180;
}
.object {
  display: flex;
  align-items: center;
  height: 22px;
  flex: none;
  padding-right: 4px;
}
.object select {
  flex: 1;
  padding: 0 0 0 3px;
}
.object svg {
  width: 10px;
  height: 10px;
}
.proptabs {
  margin-top: 5px;
}
.props {
  display: flex;
  height: 201px;
  flex: none;
  border-top: none;
}
.rows {
  flex: 1;
  overflow: hidden;
}
.rows table {
  width: 100%;
  margin-top: -9px;
  border-collapse: collapse;
  table-layout: fixed;
}
.rows tr {
  height: 16px;
}
.rows th,
.rows td {
  height: 16px;
  padding: 0 0 0 2px;
  border-bottom: 1px solid #f0f0f0;
  font-weight: normal;
  line-height: 15px;
  text-align: left;
}
.rows th {
  width: 144px;
  padding-left: 13px;
  border-right: 1px solid #f0f0f0;
}
.rows td {
  color: #000080;
}
.rows .strong th,
.rows .strong td,
.rows .current th {
  font-weight: bold;
}
.rows .current th {
  background: #f0f0f0;
}
.rows .current td {
  color: #000;
}
.rows .tree-row th {
  padding-left: 3px;
}
.rows label {
  display: flex;
  align-items: center;
  gap: 2px;
}
.rows input {
  appearance: none;
  position: relative;
  width: 11px;
  height: 11px;
  margin: 0;
  border: 1px solid #8a8a8a;
  background: #fff;
}
.rows input:checked::after {
  content: "";
  position: absolute;
  left: 3px;
  top: 0;
  width: 3px;
  height: 6px;
  border: solid #000;
  border-width: 0 2px 2px 0;
  transform: rotate(40deg);
}
.plus {
  width: 9px;
  height: 9px;
  margin-right: 2px;
  border: 1px solid #999;
  background: linear-gradient(#555, #555) center / 5px 1px no-repeat, linear-gradient(#555, #555) center / 1px 5px no-repeat;
}
.s-props {
  margin-right: 2px;
}
.s-props .blank {
  height: 15px;
  background: #fff;
}
.s-props .before {
  flex: 89;
}
.s-props .thumb {
  flex: 59;
}
.s-props .after {
  flex: 19;
}
.hint {
  flex: 1;
  min-height: 0;
  margin-top: 3px;
  padding: 0 1px;
  line-height: 16px;
}
.splitter {
  width: 6px;
  padding: 299px 0 0 1px;
}
.splitter i {
  display: block;
  height: 33px;
  width: 5px;
  background: radial-gradient(circle at 2px 2px, #888 1px, #cacaca 1px) 0 0 / 5px 5px;
}

/* Дизайнер */
.designer {
  display: grid;
  grid-template-columns: 21px 1fr 15px;
  grid-template-rows: 24px 1fr;
  flex: 1;
  min-width: 0;
}
.hruler {
  grid-column: 2 / 4;
  display: flex;
  height: 14px;
  margin: 5px 0 0 87px;
  padding: 0 5px 0 19px;
  background: #fff;
  font: 9px/14px "Liberation Sans", sans-serif;
}
.hruler span,
.vruler span {
  position: relative;
  display: flex;
  flex: 1;
  justify-content: center;
  align-items: center;
}
.hruler span::before,
.hruler span:last-child::after {
  content: "";
  position: absolute;
  left: 0;
  top: 6px;
  width: 1px;
  height: 4px;
  background: #000;
}
.hruler span:last-child::after {
  left: 100%;
}
.vruler {
  grid-column: 1;
  display: flex;
  flex-direction: column;
  width: 14px;
  margin: 49px 0 0 2px;
  padding: 20px 0 13px;
  background: #fff;
  font: 9px/14px "Liberation Sans", sans-serif;
}
.vruler span {
  writing-mode: sideways-lr;
}
.vruler span::before,
.vruler span:last-child::after {
  content: "";
  position: absolute;
  top: 0;
  left: 5px;
  width: 4px;
  height: 1px;
  background: #000;
}
.vruler span:last-child::after {
  top: 100%;
}
.vruler .cur::after {
  content: "";
  position: absolute;
  top: 18px;
  left: 0;
  width: 14px;
  height: 1px;
  background: #000;
}
.canvas {
  display: flex;
  min-width: 0;
  min-height: 0;
  padding: 10px 13px 0 10px;
  background: #808080;
  overflow: hidden;
}
.sheet {
  flex: 1;
  min-width: 0;
  padding: 36px 33px 0 73px;
  border: 1px solid #444;
  border-width: 1px 2px 0 1px;
  background: #fff;
}
.area {
  display: flex;
  flex-direction: column;
  gap: 3px;
  height: 100%;
  border: 1px dashed #b5b5b5;
  border-bottom: none;
  background:
    linear-gradient(90deg, transparent 37px, #ebebeb 37px 38px, transparent 38px 74px, #ebebeb 74px) 0 0 / 75px 75px,
    linear-gradient(transparent 37px, #ebebeb 37px 38px, transparent 38px 74px, #ebebeb 74px) 0 0 / 75px 75px,
    linear-gradient(90deg, transparent 18px, #f8f8f8 18px 19px, transparent 19px 56px, #f8f8f8 56px 57px, transparent 57px) 0 0 / 75px 75px,
    linear-gradient(transparent 18px, #f8f8f8 18px 19px, transparent 19px 56px, #f8f8f8 56px 57px, transparent 57px) 0 0 / 75px 75px;
}
.bandbox {
  position: relative;
  height: 49px;
  border: 1px solid #858585;
}
.bandbox.short {
  height: 42px;
}
.bandbox.tall {
  height: 54px;
}
.bandbox.clip {
  overflow: hidden;
}
.bh {
  display: flex;
  align-items: center;
  gap: 3px;
  height: 18px;
  padding: 0 4px 2px 5px;
  background: #dea62f;
}
.bh span {
  display: flex;
  align-items: center;
  gap: 6px;
  height: 16px;
  margin-left: auto;
}
.serif {
  padding-left: 1px;
  font: 16px/18px "Liberation Serif", serif;
}
.sans {
  padding-left: 1px;
  font-size: 15px;
  line-height: 20px;
}
.cells {
  width: 686px;
  margin-left: -1px;
  border-collapse: collapse;
  table-layout: fixed;
  font: 13px/20px "Liberation Serif", serif;
}
.cells th,
.cells td {
  height: 21px;
  padding: 0;
  border: 1px solid #000;
  font-weight: normal;
  text-align: center;
}
.data div {
  display: flex;
  flex-direction: column;
  justify-content: center;
  height: 20px;
  line-height: 15px;
  overflow: hidden;
}
.picobj {
  position: relative;
  padding: 2px 0 0 1px;
}
.picobj::before {
  content: "";
  position: absolute;
  left: -1px;
  top: -1px;
  width: 4px;
  height: 4px;
  background: #000;
}
.picobj .mark {
  left: -18px;
  top: -11px;
  width: 52px;
  height: 36px;
}
.s-main .thumb {
  height: 39px;
}
.s-main .after {
  flex: 1;
}

/* Строка состояния */
.status {
  display: flex;
  align-items: center;
  height: 19px;
  flex: none;
  border-top: 1px solid #d8d8d8;
  line-height: 18px;
}
.status span {
  display: flex;
  align-items: center;
  gap: 2px;
}
.status svg {
  width: 16px;
  height: 14px;
}
.units {
  width: 75px;
  padding-left: 2px;
  border-right: 1px solid #d8d8d8;
}
.pos {
  width: 112px;
  padding-left: 4px;
}
.size {
  width: 115px;
  border-right: 1px solid #d8d8d8;
}
.name {
  flex: 1;
  padding-left: 4px;
}
.corner {
  align-self: flex-end;
  width: 10px;
  height: 10px;
  background: radial-gradient(circle at 1px 1px, #b5b5b5 1px, transparent 1px) 0 0 / 3px 3px;
  clip-path: polygon(100% 0, 100% 100%, 0 100%);
}
```
